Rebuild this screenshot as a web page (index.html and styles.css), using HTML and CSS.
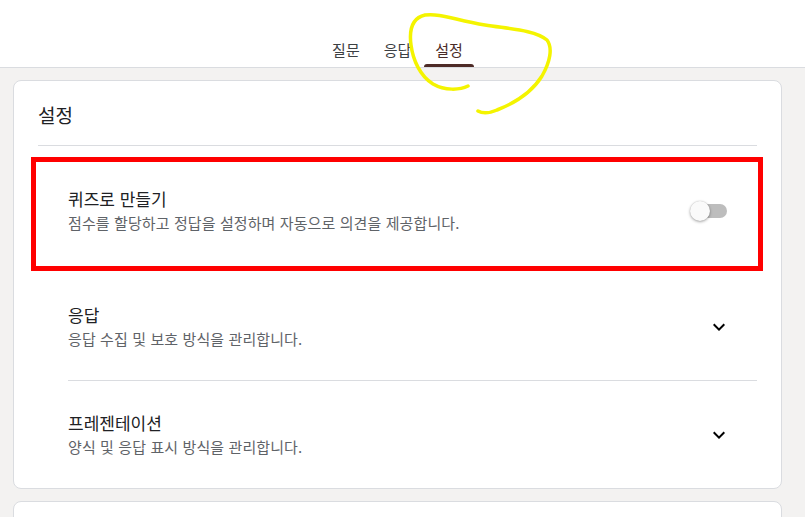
FILE: index.html
```html
<!DOCTYPE html>
<html lang="ko">
<head>
<meta charset="utf-8">
<title>설정</title>
<link rel="stylesheet" href="styles.css">
</head>
<body>
<header class="topbar">
  <nav class="tabs">
    <a class="tab">질문</a>
    <a class="tab">응답</a>
    <a class="tab active">설정</a>
  </nav>
</header>
<main class="content">
  <section class="card">
    <h2 class="card-title">설정</h2>
    <div class="group">
      <div class="row row-quiz">
        <div class="text">
          <div class="row-title">퀴즈로 만들기</div>
          <div class="row-desc">점수를 할당하고 정답을 설정하며 자동으로 의견을 제공합니다.</div>
        </div>
        <span class="switch"><span class="track"></span><span class="thumb"></span></span>
      </div>
      <div class="row row-divided">
        <div class="text">
          <div class="row-title">응답</div>
          <div class="row-desc">응답 수집 및 보호 방식을 관리합니다.</div>
        </div>
        <svg class="chevron" viewBox="0 0 24 24" width="24" height="24"><path d="M16.59 8.59L12 13.17 7.41 8.59 6 10l6 6 6-6z"/></svg>
      </div>
      <div class="row">
        <div class="text">
          <div class="row-title">프레젠테이션</div>
          <div class="row-desc">양식 및 응답 표시 방식을 관리합니다.</div>
        </div>
        <svg class="chevron" viewBox="0 0 24 24" width="24" height="24"><path d="M16.59 8.59L12 13.17 7.41 8.59 6 10l6 6 6-6z"/></svg>
      </div>
    </div>
  </section>
  <section class="card card-next"></section>
</main>
<svg class="annotations" viewBox="0 0 805 517" width="805" height="517">
  <rect x="33.5" y="159.5" width="727" height="109" fill="none" stroke="#ff0000" stroke-width="5"/>
  <path d="M468,86 C460,90 445,91 433,84 C420,76 413,60 411,45 C409,30 412,18 425,15 C440,13 455,20 485,25 C510,29 535,30 547,40 C553,48 550,62 542,76 C532,92 515,103 497,110 C490,113 483,114 478,111" fill="none" stroke="#f4f400" stroke-width="3.5" stroke-linecap="round" stroke-linejoin="round"/>
</svg>
</body>
</html>
```

FILE: styles.css
```css
* { box-sizing: border-box; }

html, body {
  margin: 0;
  padding: 0;
  height: 100%;
  overflow: hidden;
}

body {
  background: #f3f2f1;
  font-family: "Noto Sans CJK KR", "Noto Sans", sans-serif;
  color: #202124;
  position: relative;
}

.topbar {
  background: #ffffff;
  height: 68px;
  border-bottom: 1px solid #dadce0;
  display: flex;
  align-items: flex-end;
  justify-content: center;
  padding-right: 10px;
}

.tabs {
  display: flex;
  gap: 2px;
}

.tab {
  position: relative;
  height: 36px;
  padding: 0 11px;
  display: flex;
  align-items: center;
  font-size: 15px;
  color: #3c4043;
  cursor: pointer;
}

.tab.active {
  color: #4a2c28;
}

.tab.active::after {
  content: "";
  position: absolute;
  left: 0;
  right: 0;
  bottom: 0;
  height: 3px;
  border-radius: 3px 3px 0 0;
  background: #4e2b27;
}

.content {
  padding: 12px 23px 0 13px;
}

.card {
  background: #ffffff;
  border: 1px solid #dadce0;
  border-radius: 8px;
  padding: 0 24px;
  margin-bottom: 12px;
}

.card-title {
  margin: 0;
  padding: 22px 0 18px;
  font-size: 19px;
  line-height: 24px;
  font-weight: 400;
  color: #202124;
  border-bottom: 1px solid #dadce0;
}

.group {
  padding-left: 30px;
}

.row {
  display: flex;
  align-items: center;
  justify-content: space-between;
  padding: 31px 26px 31px 0;
}

.row-quiz {
  padding-top: 42px;
  padding-bottom: 40px;
}

.row-divided {
  border-bottom: 1px solid #dadce0;
}

.row-title {
  font-size: 17px;
  line-height: 22px;
  color: #202124;
}

.row-desc {
  margin-top: 3px;
  font-size: 15px;
  line-height: 20px;
  color: #5f6368;
  letter-spacing: 0.1px;
}

.switch {
  position: relative;
  width: 40px;
  height: 20px;
  margin-right: 1px;
  flex: none;
}

.track {
  position: absolute;
  left: 1px;
  top: 3px;
  width: 36px;
  height: 14px;
  border-radius: 7px;
  background: #bdbdbd;
}

.thumb {
  position: absolute;
  left: 0;
  top: 0;
  width: 20px;
  height: 20px;
  border-radius: 50%;
  background: #fafafa;
  box-shadow: 0 1px 3px rgba(0, 0, 0, 0.35), 0 0 1px rgba(0, 0, 0, 0.2);
}

.chevron {
  flex: none;
  fill: #000000;
}

.card-next {
  height: 60px;
}

.annotations {
  position: absolute;
  left: 0;
  top: 0;
  pointer-events: none;
}
```
